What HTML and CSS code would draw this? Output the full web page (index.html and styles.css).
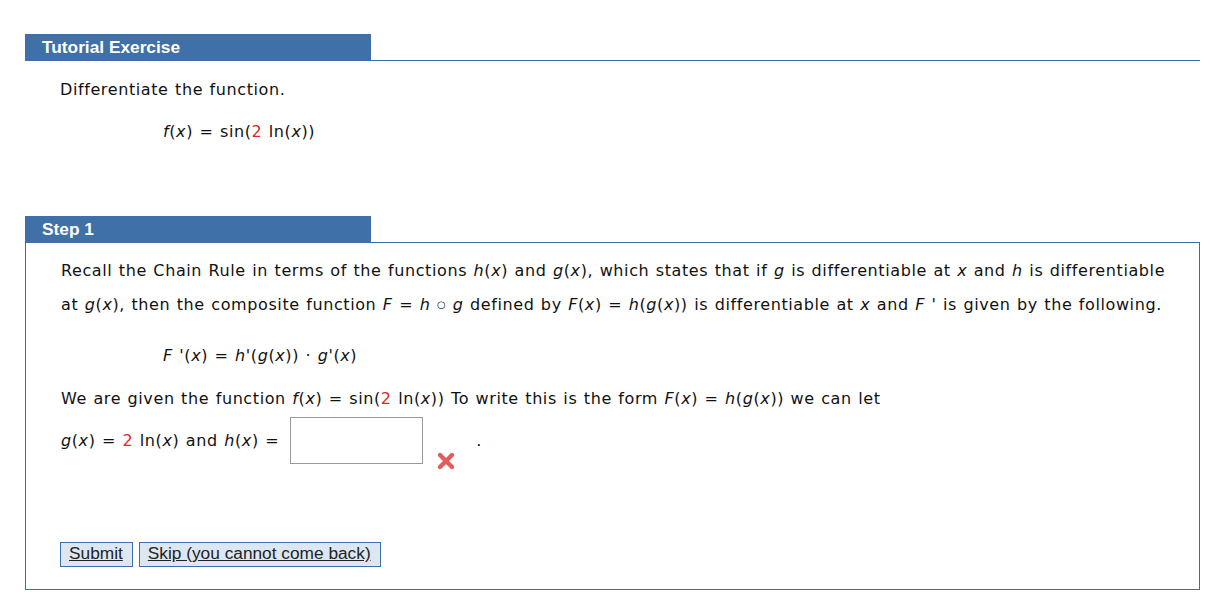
FILE: index.html
```html
<!DOCTYPE html>
<html>
<head>
<meta charset="utf-8">
<link rel="stylesheet" href="styles.css">
</head>
<body>
<div class="page">
  <div class="section-head"><div class="tab">Tutorial Exercise</div></div>
  <div class="intro">
    <p class="line">Differentiate the function.</p>
    <p class="formula first-formula"><i>f</i>(<i>x</i>) = sin(<span class="red">2</span> ln(<i>x</i>))</p>
  </div>
  <div class="step-head"><div class="tab">Step 1</div></div>
  <div class="step-box">
    <p class="para">Recall the Chain Rule in terms of the functions <i>h</i>(<i>x</i>) and <i>g</i>(<i>x</i>), which states that if <i>g</i> is differentiable at <i>x</i> and <i>h</i> is differentiable<br>at <i>g</i>(<i>x</i>), then the composite function <i>F</i> = <i>h</i> <span class="comp">&#9675;</span> <i>g</i> defined by <i>F</i>(<i>x</i>) = <i>h</i>(<i>g</i>(<i>x</i>)) is differentiable at <i>x</i> and <i>F</i> ' is given by the following.</p>
    <p class="formula chain"><i>F</i> '(<i>x</i>) = <i>h</i>'(<i>g</i>(<i>x</i>)) · <i>g</i>'(<i>x</i>)</p>
    <p class="para given">We are given the function <i>f</i>(<i>x</i>) = sin(<span class="red">2</span> ln(<i>x</i>)) To write this is the form <i>F</i>(<i>x</i>) = <i>h</i>(<i>g</i>(<i>x</i>)) we can let</p>
    <div class="answer-row">
      <span class="lhs"><i>g</i>(<i>x</i>) = <span class="red">2</span> ln(<i>x</i>) and <i>h</i>(<i>x</i>) =</span>
      <span class="input"></span>
      <span class="mark"><svg width="20" height="20" viewBox="0 0 20 20"><path d="M4 4 L16 16 M16 4 L4 16" stroke="#e25c5c" stroke-width="4.4" stroke-linecap="round"/></svg></span>
      <span class="period">.</span>
    </div>
    <div class="buttons">
      <span class="btn">Submit</span>
      <span class="btn">Skip (you cannot come back)</span>
    </div>
  </div>
</div>
</body>
</html>
```
FILE: styles.css
```css
html, body { margin: 0; padding: 0; background: #fff; }
body { font-family: "DejaVu Sans", Verdana, sans-serif; font-size: 16px; letter-spacing: 0.6px; word-spacing: 0.8px; color: #111; }
.page { width: 1175px; margin-left: 25px; padding-top: 34px; }
.section-head, .step-head { border-bottom: 1px solid #3f6ea8; height: 26px; }
.tab { width: 329px; height: 26px; background: #4070a8; color: #fff; font-family: "Liberation Sans", Arial, sans-serif; font-weight: bold; font-size: 17.3px; letter-spacing: 0; word-spacing: 0; line-height: 26px; padding-left: 17px; }
.step-head { border-bottom: none; }
.intro { padding-left: 35px; height: 155px; }
.line { margin: 0; padding-top: 19px; line-height: 20px; }
.formula { margin: 0; padding-left: 103px; line-height: 20px; }
.first-formula { padding-top: 22px; }
.red { color: #e0261f; }
i { font-style: italic; }
.step-box { border: 1px solid #3f6ea8; height: 346px; padding: 0 20px 0 35px; }
.para { margin: 0; line-height: 34px; padding-top: 11px; white-space: nowrap; }
.comp { font-size: 10px; font-weight: bold; vertical-align: 2px; }
.chain { padding-top: 24px; padding-left: 102px; }
.given { padding-top: 16px; }
.answer-row { display: flex; align-items: flex-start; padding-top: 1px; }
.lhs { line-height: 34px; padding-top: 7px; }
.input { width: 131px; height: 45px; border: 1px solid #999; margin-left: 11px; margin-top: 0; }
.mark { margin-left: 13px; margin-top: 34px; width: 20px; height: 20px; }
.period { margin-left: 20px; padding-top: 7px; line-height: 34px; }
.buttons { display: flex; gap: 6px; margin-top: 71px; margin-left: -1px; }
.btn { font-family: "Liberation Sans", Arial, sans-serif; font-size: 17.3px; letter-spacing: 0; word-spacing: 0; color: #222; text-decoration: underline; background: #dde7f1; border: 1px solid #3f6ea8; padding: 1px 9px 3px 8px; line-height: 19px; }
```
